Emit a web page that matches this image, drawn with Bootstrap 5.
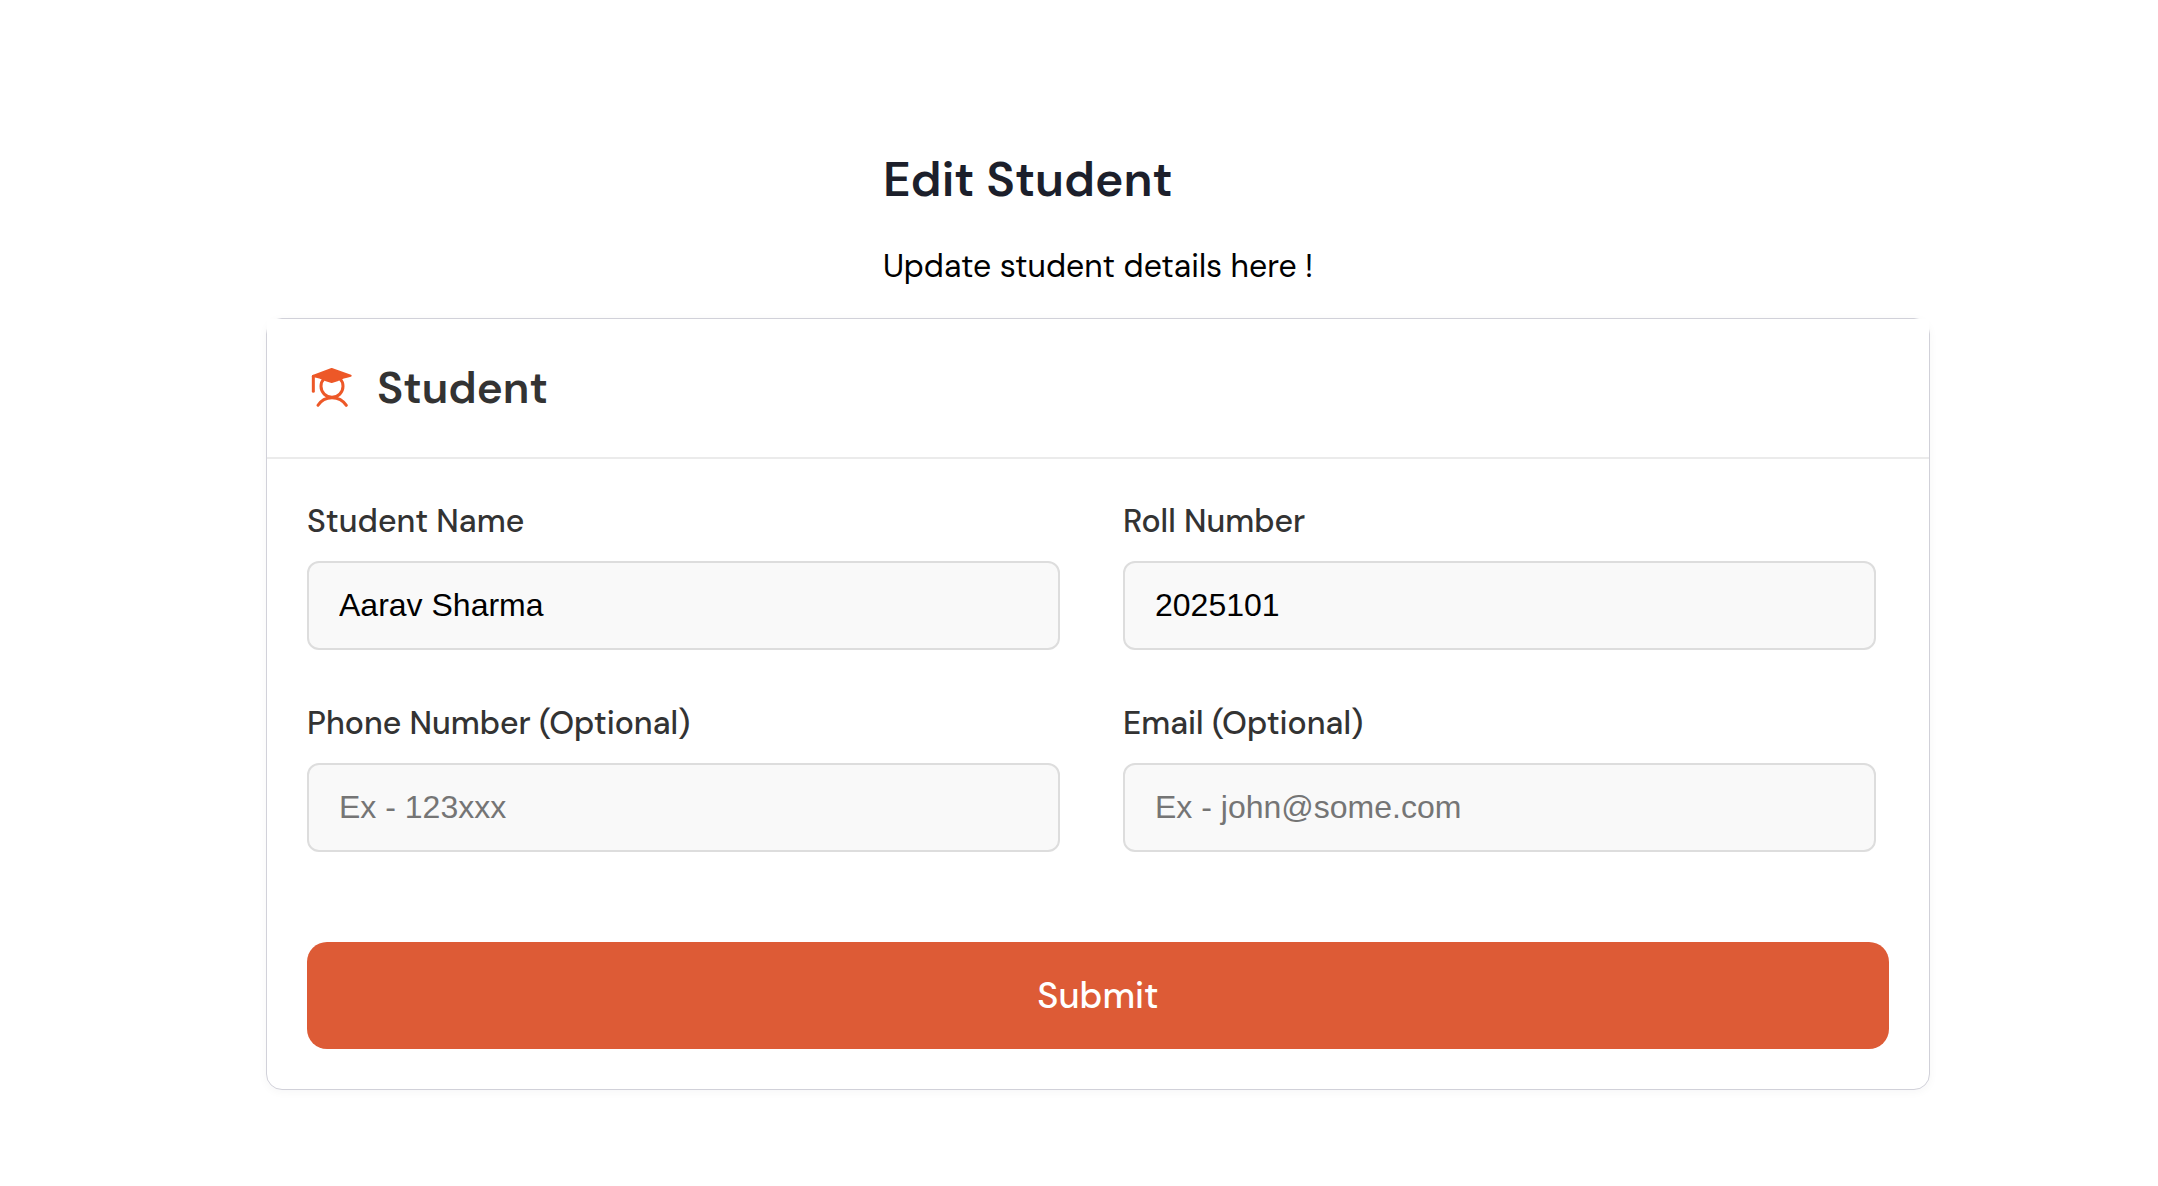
<!DOCTYPE html>
<html lang="en">
<head>
<meta charset="utf-8">
<meta name="viewport" content="width=device-width, initial-scale=1">
<title>Edit Student</title>
<link href="https://cdn.jsdelivr.net/npm/bootstrap@5.3.0/dist/css/bootstrap.min.css" rel="stylesheet">
<style>
body { font-family: "DM Sans", Inter, sans-serif; color: #000; background: #fff; }
.page { padding: 148px 228px 96px 266px; }
.page-title { font-size: 48px; line-height: 64px; font-weight: 600; color: #1c1f2b; margin-bottom: 30px; }
.page-intro { font-size: 32px; line-height: 48px; margin-bottom: 28px; }
.panel { border: 1px solid #d1d1d9; border-radius: 16px; background: #fff; box-shadow: 0 2px 10px rgba(20, 20, 50, .04); }
.panel-head { background: #fff; border-bottom: 2px solid #ebebeb; padding: 37px 40px; gap: 22px; }
.panel-head h2 { font-size: 44px; line-height: 64px; font-weight: 600; color: #333; }
.panel-icon { width: 48px; height: 48px; }
.panel-form { padding: 40px; }
.field-grid { --bs-gutter-x: 63px; --bs-gutter-y: 51px; }
.fields { padding-right: 13px; }
.field-label { display: block; font-size: 32px; line-height: 44px; font-weight: 500; color: #333; margin-bottom: 18px; }
.field-input, .field-input:focus { height: 89px; padding: 0 30px; border: 2px solid #ddd; border-radius: 12px; background: #f9f9f9; color: #000; font: 32px "Liberation Sans", Arial, sans-serif; }
.field-input::placeholder { color: #757575; }
.submit-btn, .submit-btn:hover { height: 107px; margin-top: 90px; border: 0; border-radius: 20px; background: #dd5b36; color: #fff; font-size: 36px; font-weight: 500; }
</style>
</head>
<body>
<main class="page d-flex flex-column">
  <header class="align-self-center">
    <h1 class="page-title">Edit Student</h1>
    <p class="page-intro">Update student details here !</p>
  </header>
  <section class="panel">
    <div class="panel-head d-flex align-items-center">
      <svg class="panel-icon flex-shrink-0" viewBox="-9 -6 144 144" fill="none" stroke="#ed5828" stroke-linecap="round" stroke-linejoin="round" aria-hidden="true">
        <circle cx="66" cy="61" r="33" stroke-width="9"/>
        <path d="M24 118Q38 95 66 95T109 118" stroke-width="9"/>
        <path d="M10 31V76" stroke-width="9"/>
        <path d="M65 9L122 29Q98 34 84 42L65 48L46 42Q30 33 9 30Z" fill="#ed5828" stroke-width="6"/>
      </svg>
      <h2 class="mb-0">Student</h2>
    </div>
    <form class="panel-form">
      <div class="fields">
        <div class="row row-cols-2 field-grid mt-0">
          <div class="col mt-0">
            <label class="field-label" for="name">Student Name</label>
            <input class="form-control field-input" id="name" type="text" value="Aarav Sharma">
          </div>
          <div class="col mt-0">
            <label class="field-label" for="roll">Roll Number</label>
            <input class="form-control field-input" id="roll" type="text" value="2025101">
          </div>
          <div class="col">
            <label class="field-label" for="phone">Phone Number (Optional)</label>
            <input class="form-control field-input" id="phone" type="tel" placeholder="Ex - 123xxx">
          </div>
          <div class="col">
            <label class="field-label" for="email">Email (Optional)</label>
            <input class="form-control field-input" id="email" type="email" placeholder="Ex - john@some.com">
          </div>
        </div>
      </div>
      <button class="btn submit-btn w-100" type="submit">Submit</button>
    </form>
  </section>
</main>
<script src="https://cdn.jsdelivr.net/npm/bootstrap@5.3.0/dist/js/bootstrap.bundle.min.js"></script>
</body>
</html>
